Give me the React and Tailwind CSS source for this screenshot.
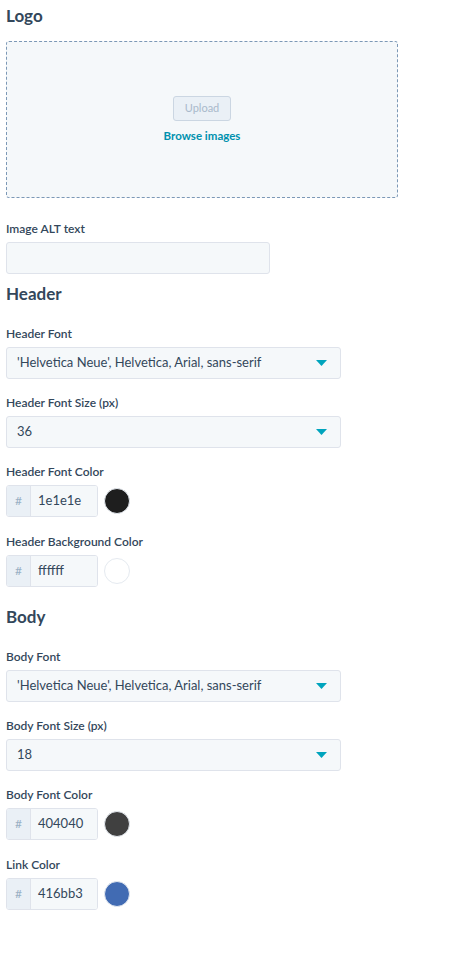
import { useState } from "react";

const font = { fontFamily: "Lato, 'Open Sans', sans-serif" };

function Label({ children }) {
  return (
    <div className="text-[12px] leading-[16px] font-semibold text-[#33475b] mb-[5px]">
      {children}
    </div>
  );
}

function Heading({ children, className = "" }) {
  return (
    <h2 className={"text-[17px] leading-[24px] font-bold text-[#33475b] " + className}>
      {children}
    </h2>
  );
}

function SelectField({ label, value }) {
  return (
    <div className="mb-[16px]">
      <Label>{label}</Label>
      <div className="w-[335px] h-[32px] flex items-center justify-between pl-[10px] pr-[13px] bg-[#f5f8fa] border border-[#dfe3eb] rounded-[3px] text-[13px] text-[#33475b]">
        <span>{value}</span>
        <svg width="11" height="6" viewBox="0 0 11 6">
          <path d="M0 0 L11 0 L5.5 6 Z" fill="#00a4bd" />
        </svg>
      </div>
    </div>
  );
}

function ColorField({ label, value, color, last }) {
  return (
    <div className={last ? "" : "mb-[17px]"}>
      <Label>{label}</Label>
      <div className="flex items-center gap-[6px]">
        <div className="w-[92px] h-[32px] flex border border-[#dfe3eb] rounded-[3px] overflow-hidden text-[13px]">
          <div className="w-[24px] flex items-center justify-center bg-[#eaf0f6] border-r border-[#dfe3eb] text-[#99afc4] text-[12px]">
            #
          </div>
          <div className="flex-1 flex items-center pl-[7px] bg-[#f5f8fa] text-[#33475b]">
            {value}
          </div>
        </div>
        <div
          className="w-[26px] h-[26px] rounded-full border border-[#e5eaf0]"
          style={{ backgroundColor: color }}
        />
      </div>
    </div>
  );
}

export default function App() {
  const [alt, setAlt] = useState("");

  return (
    <div className="min-h-screen bg-white px-[6px] pt-[4px] pb-10" style={font}>
      <Heading>Logo</Heading>

      <div className="mt-[13px] w-[392px] h-[157px] border border-dashed border-[#7c98b6] rounded-[3px] bg-[#f5f8fa] flex flex-col items-center pt-[54px]">
        <button className="w-[58px] h-[25px] bg-[#eaf0f6] border border-[#cbd6e2] rounded-[3px] text-[11px] text-[#a9b9cb]">
          Upload
        </button>
        <div className="mt-[6px] text-[11.5px] font-bold text-[#0091ae]">Browse images</div>
      </div>

      <div className="mt-[23px]">
        <Label>Image ALT text</Label>
        <input
          value={alt}
          onChange={(e) => setAlt(e.target.value)}
          className="w-[264px] h-[32px] bg-[#f5f8fa] border border-[#dfe3eb] rounded-[3px] outline-none px-2"
        />
      </div>

      <Heading className="mt-[8px] mb-[20px]">Header</Heading>
      <SelectField label="Header Font" value="'Helvetica Neue', Helvetica, Arial, sans-serif" />
      <SelectField label="Header Font Size (px)" value="36" />
      <ColorField label="Header Font Color" value="1e1e1e" color="#1e1e1e" />
      <ColorField label="Header Background Color" value="ffffff" color="#ffffff" last />

      <Heading className="mt-[18px] mb-[20px]">Body</Heading>
      <SelectField label="Body Font" value="'Helvetica Neue', Helvetica, Arial, sans-serif" />
      <SelectField label="Body Font Size (px)" value="18" />
      <ColorField label="Body Font Color" value="404040" color="#404040" />
      <ColorField label="Link Color" value="416bb3" color="#416bb3" last />
    </div>
  );
}
